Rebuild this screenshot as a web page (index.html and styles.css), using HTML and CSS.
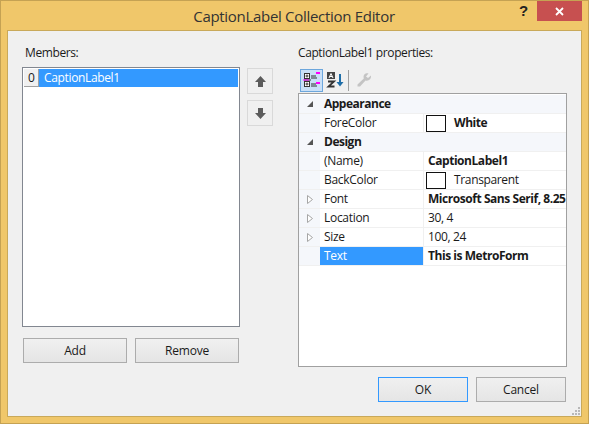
FILE: index.html
```html
<!DOCTYPE html>
<html lang="en">
<head>
    <meta charset="UTF-8">
    <title>CaptionLabel Collection Editor</title>
    <link rel="stylesheet" href="styles.css">
</head>
<body>
    <div class="window">
        <div class="titlebar">
            <span class="title">CaptionLabel Collection Editor</span>
            <span class="help">?</span>
            <span class="close">
                <svg width="9" height="9" viewBox="0 0 9 9"><path d="M1 1L8 8M8 1L1 8" stroke="#fff" stroke-width="1.8"/></svg>
            </span>
        </div>
        <div class="client">
            <div class="members">
                <div class="caption">Members:</div>
                <div class="listbox">
                    <div class="item"><span class="index">0</span><span class="item-text">CaptionLabel1</span></div>
                </div>
                <div class="member-buttons">
                    <button class="btn wide">Add</button>
                    <button class="btn wide">Remove</button>
                </div>
            </div>
            <div class="arrows">
                <button class="btn arrow">
                    <svg width="13" height="13" viewBox="0 0 13 13"><path d="M6.5 1L12 7H9V12H4V7H1Z" fill="#5c5c5c"/></svg>
                </button>
                <button class="btn arrow">
                    <svg width="13" height="13" viewBox="0 0 13 13"><path d="M6.5 12L12 6H9V1H4V6H1Z" fill="#5c5c5c"/></svg>
                </button>
            </div>
            <div class="props">
                <div class="caption">CaptionLabel1 properties:</div>
                <div class="toolbar">
                    <span class="tool active">
                        <svg width="18" height="18" viewBox="0 0 18 18">
                            <rect x="1.5" y="2.5" width="5" height="5" fill="#fff" stroke="#333"/>
                            <path d="M2.5 5H5.5M4 3.5V6.5" stroke="#333"/>
                            <rect x="1.5" y="10.5" width="5" height="5" fill="#fff" stroke="#333"/>
                            <path d="M2.5 13H5.5M4 11.5V14.5" stroke="#333"/>
                            <path d="M8 5H13M8 7H14M8 13H13M8 15H14M1 9H8" stroke="#333"/>
                            <path d="M0 9H6" stroke="#f0f" stroke-width="1"/>
                            <rect x="13" y="1" width="4" height="2" fill="#f0f"/>
                            <rect x="13" y="11" width="4" height="2" fill="#f0f"/>
                        </svg>
                    </span>
                    <span class="tool">
                        <svg width="18" height="18" viewBox="0 0 18 18">
                            <rect x="1" y="1" width="8" height="7" fill="#444"/>
                            <path d="M3 7L5 2.5L7 7M3.8 5.5H6.2" stroke="#fff" fill="none"/>
                            <path d="M2 10.5H8L2.5 15.5H8.5" stroke="#333" stroke-width="1.8" fill="none"/>
                            <path d="M14 3V14" stroke="#1f6ea8" stroke-width="2"/>
                            <path d="M10.5 11L14 15.5L17.5 11Z" fill="#1f6ea8"/>
                        </svg>
                    </span>
                    <span class="tool-sep"></span>
                    <span class="tool">
                        <svg width="16" height="16" viewBox="0 0 16 16">
                            <path d="M15 3.5L12 6L10 4.5L12.5 1.5C10 0.5 7.5 2 7.5 5L7.8 6.5L1.5 12.5V14.5H4L9.5 8.5C12.5 9.5 15.5 7 15 3.5Z" fill="#c4c4c4"/>
                        </svg>
                    </span>
                </div>
                <div class="grid">
                    <div class="row category"><span class="gutter"><i class="open"></i></span><span class="name">Appearance</span></div>
                    <div class="row"><span class="gutter"></span><span class="name">ForeColor</span><span class="value bold"><i class="swatch"></i>White</span></div>
                    <div class="row category"><span class="gutter"><i class="open"></i></span><span class="name">Design</span></div>
                    <div class="row"><span class="gutter"></span><span class="name">(Name)</span><span class="value bold">CaptionLabel1</span></div>
                    <div class="row"><span class="gutter"></span><span class="name">BackColor</span><span class="value"><i class="swatch"></i>Transparent</span></div>
                    <div class="row"><span class="gutter"><svg class="shut" width="6" height="9" viewBox="0 0 6 9"><path d="M.5.5L5.5 4.5L.5 8.5Z" fill="#fff" stroke="#a6a6a6"/></svg></span><span class="name">Font</span><span class="value bold">Microsoft Sans Serif, 8.25</span></div>
                    <div class="row"><span class="gutter"><svg class="shut" width="6" height="9" viewBox="0 0 6 9"><path d="M.5.5L5.5 4.5L.5 8.5Z" fill="#fff" stroke="#a6a6a6"/></svg></span><span class="name">Location</span><span class="value">30, 4</span></div>
                    <div class="row"><span class="gutter"><svg class="shut" width="6" height="9" viewBox="0 0 6 9"><path d="M.5.5L5.5 4.5L.5 8.5Z" fill="#fff" stroke="#a6a6a6"/></svg></span><span class="name">Size</span><span class="value">100, 24</span></div>
                    <div class="row selected"><span class="gutter"></span><span class="name">Text</span><span class="value bold">This is MetroForm</span></div>
                </div>
                <div class="footer">
                    <button class="btn dialog default">OK</button>
                    <button class="btn dialog">Cancel</button>
                </div>
            </div>
            <svg class="grip" width="9" height="9" viewBox="0 0 9 9" fill="#b8b8b8">
                <rect x="6" y="0" width="2" height="2"/>
                <rect x="3" y="3" width="2" height="2"/><rect x="6" y="3" width="2" height="2"/>
                <rect x="0" y="6" width="2" height="2"/><rect x="3" y="6" width="2" height="2"/><rect x="6" y="6" width="2" height="2"/>
            </svg>
        </div>
    </div>
</body>
</html>
```

FILE: styles.css
```css
* {
    box-sizing: border-box;
}
body {
    margin: 0;
    font-family: 'Open Sans', sans-serif;
    font-size: 12px;
    color: #1a1a1a;
}
.window {
    width: 589px;
    height: 424px;
    display: flex;
    flex-direction: column;
    background: #f0c76a;
    border: 1px solid #c5a253;
}
.titlebar {
    height: 29px;
    flex: none;
    position: relative;
    display: flex;
    justify-content: center;
    padding-top: 5px;
}
.title {
    font-size: 15px;
    line-height: 20px;
    color: #333;
    letter-spacing: -0.3px;
    margin-right: 1px;
}
.help {
    position: absolute;
    left: 518px;
    top: 0;
    font-family: 'Liberation Sans', sans-serif;
    font-size: 15px;
    font-weight: bold;
    line-height: 20px;
    color: #222;
}
.close {
    position: absolute;
    left: 536px;
    top: 0;
    width: 45px;
    height: 20px;
    background: #c75050;
    display: flex;
    align-items: center;
    justify-content: center;
}
.client {
    flex: 1;
    position: relative;
    display: flex;
    margin: 0 6px 6px;
    padding: 14px 0 14px 14px;
    background: #f0f0f0;
    border: 1px solid #c9a95a;
}
.caption {
    height: 16px;
    line-height: 16px;
    letter-spacing: -0.4px;
}
.members {
    width: 218px;
    flex: none;
    display: flex;
    flex-direction: column;
}
.members .caption {
    padding-left: 3px;
}
.listbox {
    height: 260px;
    margin-top: 6px;
    padding: 1px;
    background: #fff;
    border: 1px solid #828790;
}
.item {
    height: 18px;
    display: flex;
    background: #3399ff;
    color: #fff;
    line-height: 18px;
}
.index {
    width: 15px;
    padding-left: 1px;
    text-align: center;
    color: #1a1a1a;
    background: #f0f0f0;
    border: 1px solid #a0a0a0;
    border-width: 0 1px 1px 0;
    line-height: 17px;
}
.item-text {
    padding-left: 5px;
    letter-spacing: -0.35px;
}
.btn {
    font: inherit;
    color: inherit;
    padding: 0;
    background: linear-gradient(#f0f0f0, #e5e5e5);
    border: 1px solid #acacac;
    letter-spacing: -0.2px;
}
.member-buttons {
    display: flex;
    gap: 8px;
    margin: 11px 0 0 1px;
}
.wide {
    width: 104px;
    height: 25px;
}
.arrows {
    width: 26px;
    flex: none;
    margin: 23px 25px 0 7px;
    display: flex;
    flex-direction: column;
    gap: 6px;
}
.arrow {
    width: 26px;
    height: 26px;
    background: #f0f0f0;
    border: 1px solid #d9d9d9;
    display: flex;
    align-items: center;
    justify-content: center;
}
.props {
    width: 269px;
    flex: none;
    display: flex;
    flex-direction: column;
}
.toolbar {
    height: 24px;
    margin-top: 7px;
    padding-left: 2px;
    display: flex;
    align-items: center;
}
.tool {
    width: 23px;
    height: 23px;
    display: flex;
    align-items: center;
    justify-content: center;
    border: 1px solid transparent;
}
.tool.active {
    background: #c9e0f7;
    border-color: #6ca6dc;
}
.tool-sep {
    width: 1px;
    height: 21px;
    margin: 0 3px 0 2px;
    background: #a0a0a0;
}
.grid {
    height: 274px;
    margin-top: 1px;
    padding-top: 1px;
    background: #fff;
    border: 1px solid #a0a0a0;
}
.row {
    height: 19px;
    display: flex;
    line-height: 18px;
    border-bottom: 1px solid #f0f0f0;
}
.gutter {
    width: 21px;
    flex: none;
    background: #f5f7fb;
    display: flex;
    align-items: center;
    justify-content: center;
}
.name {
    width: 104px;
    flex: none;
    padding-left: 4px;
    letter-spacing: -0.3px;
    border-right: 1px solid #f0f0f0;
}
.value {
    padding-left: 4px;
    white-space: nowrap;
    overflow: hidden;
    flex: 1;
    display: flex;
    align-items: center;
    letter-spacing: -0.35px;
}
.bold {
    font-weight: bold;
    letter-spacing: -0.45px;
}
.swatch {
    width: 20px;
    height: 17px;
    margin: 0 8px 0 -2px;
    flex: none;
    background: #fff;
    border: 1px solid #111;
}
.category {
    background: #f5f7fb;
}
.category .name {
    font-weight: bold;
    border-right: 0;
    letter-spacing: -0.5px;
}
.open {
    width: 0;
    height: 0;
    border-style: solid;
    border-width: 0 0 6px 6px;
    border-color: transparent transparent #555 transparent;
}
.selected .name {
    background: #3399ff;
    color: #fff;
}
.footer {
    display: flex;
    justify-content: flex-end;
    gap: 8px;
    margin-top: 10px;
    padding-right: 1px;
}
.dialog {
    width: 90px;
    height: 25px;
}
.default {
    border-color: #3399ff;
}
.grip {
    position: absolute;
    right: 0;
    bottom: 0;
}
```
